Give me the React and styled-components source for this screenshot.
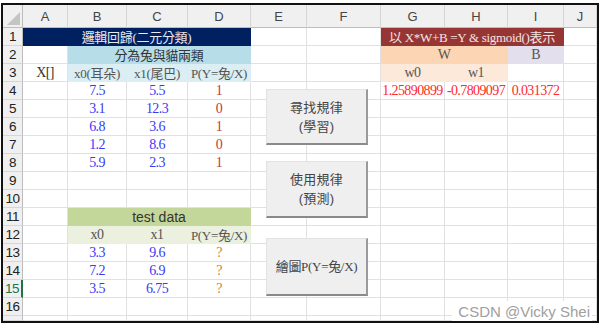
import React from 'react'
import styled, { createGlobalStyle } from 'styled-components'

const SERIF = `"Liberation Serif", "Noto Sans CJK TC", serif`
const SANS = `"Liberation Sans", "Noto Sans CJK TC", sans-serif`

const GlobalStyle = createGlobalStyle`
  html, body {
    margin: 0;
    padding: 0;
    background: #ffffff;
  }
`

const COLS = ['A', 'B', 'C', 'D', 'E', 'F', 'G', 'H', 'I', 'J']
const ROWS = Array.from({ length: 17 }, (_, i) => i + 1)

const BLUE = '#3a3af6'
const RED = '#c8363c'
const ORANGE = '#c4844a'
const BRIGHT = '#ff2a2a'

// cells keyed by address; span merges to the right, num = figure cell
const cells = {
  A1: { text: '邏輯回歸(二元分類)', span: 4, bg: '#002060', color: '#e8e8ee' },
  B2: { text: '分為兔與貓兩類', span: 3, bg: '#b7dee8', color: '#333' },
  A3: { text: 'X[]', color: '#333', num: true },
  B3: { text: 'x0(耳朵)', bg: '#daeef3', color: '#555' },
  C3: { text: 'x1(尾巴)', bg: '#daeef3', color: '#555' },
  D3: { text: 'P(Y=兔/X)', bg: '#daeef3', color: '#555' },

  B4: { text: '7.5', color: BLUE, num: true }, C4: { text: '5.5', color: BLUE, num: true }, D4: { text: '1', color: RED, num: true },
  B5: { text: '3.1', color: BLUE, num: true }, C5: { text: '12.3', color: BLUE, num: true }, D5: { text: '0', color: RED, num: true },
  B6: { text: '6.8', color: BLUE, num: true }, C6: { text: '3.6', color: BLUE, num: true }, D6: { text: '1', color: RED, num: true },
  B7: { text: '1.2', color: BLUE, num: true }, C7: { text: '8.6', color: BLUE, num: true }, D7: { text: '0', color: RED, num: true },
  B8: { text: '5.9', color: BLUE, num: true }, C8: { text: '2.3', color: BLUE, num: true }, D8: { text: '1', color: RED, num: true },

  B11: { text: 'test data', span: 3, bg: '#c4d79b', color: '#333', sans: true },
  B12: { text: 'x0', bg: '#ebf1de', color: '#555', num: true },
  C12: { text: 'x1', bg: '#ebf1de', color: '#555', num: true },
  D12: { text: 'P(Y=兔/X)', bg: '#ebf1de', color: '#555' },
  B13: { text: '3.3', color: BLUE, num: true }, C13: { text: '9.6', color: BLUE, num: true }, D13: { text: '?', color: ORANGE, num: true },
  B14: { text: '7.2', color: BLUE, num: true }, C14: { text: '6.9', color: BLUE, num: true }, D14: { text: '?', color: ORANGE, num: true },
  B15: { text: '3.5', color: BLUE, num: true }, C15: { text: '6.75', color: BLUE, num: true }, D15: { text: '?', color: ORANGE, num: true },

  G1: { text: '以 X*W+B =Y & sigmoid()表示', span: 3, bg: '#963634', color: '#f4e4e4' },
  G2: { text: 'W', span: 2, bg: '#fcd5b4', color: '#555', num: true },
  I2: { text: 'B', bg: '#e4dfec', color: '#555', num: true },
  G3: { text: 'w0', bg: '#fde9d9', color: '#555', num: true },
  H3: { text: 'w1', bg: '#fde9d9', color: '#555', num: true },
  G4: { text: '1.25890899', color: BRIGHT, num: true },
  H4: { text: '-0.7809097', color: BRIGHT, num: true },
  I4: { text: '0.031372', color: BRIGHT, num: true },
}

const Frame = styled.div`
  position: relative;
  margin: 3px 0 0 1px;
  width: 598px;
  height: 320px;
  box-sizing: border-box;
  border: 2px solid #111;
  overflow: hidden;
  background: #fff;
`

const Sheet = styled.div`
  display: grid;
  grid-template-columns: 20px 45px 59px 61px 63px 56px 74px 64px 63px 56px 1fr;
  grid-template-rows: 23px repeat(16, 18px) 1fr;
  height: 100%;
`

const Corner = styled.div`
  background: #f0f0f0;
  border-right: 1px solid #bdbdbd;
  border-bottom: 1px solid #bdbdbd;
  display: flex;
  align-items: flex-end;
  justify-content: flex-end;
  padding: 0 2px 2px 0;
  box-sizing: border-box;
`

const ColHead = styled.div`
  background: #f0f0f0;
  border-right: 1px solid #d6d6d6;
  border-bottom: 1px solid #bdbdbd;
  display: flex;
  align-items: center;
  justify-content: center;
  font: 13px ${SANS};
  color: #444;
  box-sizing: border-box;
`

const RowHead = styled.div`
  background: #f0f0f0;
  border-right: ${p => (p.$selected ? '2px solid #217346' : '1px solid #bdbdbd')};
  border-bottom: 1px solid #d6d6d6;
  display: flex;
  align-items: center;
  justify-content: center;
  font: 13.5px ${SANS};
  color: ${p => (p.$selected ? '#217346' : '#222')};
  box-sizing: border-box;
  letter-spacing: -0.5px;
`

const Cell = styled.div`
  grid-column: span ${p => p.$span || 1};
  background: ${p => p.$bg || '#fff'};
  border-right: 1px solid ${p => p.$bg || '#e1e1e1'};
  border-bottom: 1px solid ${p => p.$bg || '#e1e1e1'};
  box-sizing: border-box;
  display: flex;
  align-items: center;
  justify-content: center;
  white-space: nowrap;
  overflow: visible;
  color: ${p => p.$color || '#333'};
  font-family: ${p => (p.$sans ? SANS : SERIF)};
  font-size: ${p => (p.$sans ? '14px' : p.$num ? '14px' : '13px')};
  letter-spacing: ${p => (p.$sans ? '0' : p.$num ? '-0.6px' : '-0.3px')};
`

const SheetButton = styled.div`
  position: absolute;
  left: 263px;
  top: ${p => p.$top}px;
  width: 102px;
  height: ${p => p.$h}px;
  box-sizing: border-box;
  background: #efefef;
  border-top: 1px solid #e2e2e2;
  border-left: 1px solid #e2e2e2;
  border-right: 2px solid #9a9a9a;
  border-bottom: 2px solid #8a8a8a;
  display: flex;
  flex-direction: column;
  align-items: center;
  justify-content: center;
  color: #444;
  font: 13px ${p => (p.$serif ? SERIF : SANS)};
  line-height: 19px;
  letter-spacing: ${p => (p.$serif ? '-0.3px' : '0.2px')};
`

const Watermark = styled.div`
  position: absolute;
  right: 5px;
  bottom: 0;
  height: 20px;
  padding: 0 2px 0 6px;
  background: #fff;
  display: flex;
  align-items: center;
  font: 15px ${SANS};
  color: #a0a0a0;
`

function CornerMark() {
  return (
    <svg width="13" height="13" viewBox="0 0 13 13">
      <polygon points="13,0 13,13 0,13" fill="#c4c4c4" />
    </svg>
  )
}

function buildCells() {
  const out = []
  out.push(<Corner key="corner"><CornerMark /></Corner>)
  COLS.forEach(c => out.push(<ColHead key={'h' + c}>{c}</ColHead>))

  ROWS.forEach(r => {
    out.push(
      <RowHead key={'r' + r} $selected={r === 15}>{r <= 16 ? r : ''}</RowHead>
    )
    let skip = 0
    COLS.forEach(c => {
      if (skip > 0) {
        skip--
        return
      }
      const d = cells[c + r]
      if (d) {
        skip = (d.span || 1) - 1
        out.push(
          <Cell key={c + r} $span={d.span} $bg={d.bg} $color={d.color} $sans={d.sans} $num={d.num}>
            {d.text}
          </Cell>
        )
      } else {
        out.push(<Cell key={c + r} />)
      }
    })
  })
  return out
}

export default function App() {
  return (
    <>
      <GlobalStyle />
      <Frame>
        <Sheet>{buildCells()}</Sheet>
        <SheetButton $top={84} $h={56}>
          <span>尋找規律</span>
          <span>(學習)</span>
        </SheetButton>
        <SheetButton $top={156} $h={57}>
          <span>使用規律</span>
          <span>(預測)</span>
        </SheetButton>
        <SheetButton $top={233} $h={58} $serif>
          <span>繪圖P(Y=兔/X)</span>
        </SheetButton>
        <Watermark>CSDN @Vicky Shei</Watermark>
      </Frame>
    </>
  )
}
